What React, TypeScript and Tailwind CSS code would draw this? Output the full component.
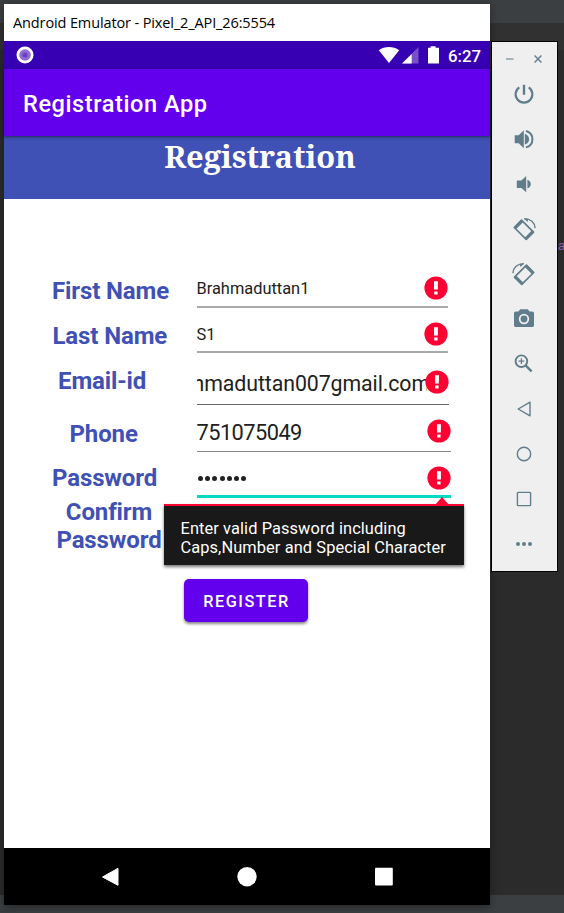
import type { ReactNode } from 'react';

function ErrorIcon({ className }: { className: string }) {
  return (
    <svg viewBox="0 0 24 24" className={`h-6 w-6 shrink-0 ${className}`}>
      <circle cx="12" cy="12" r="11.6" fill="#ff0033" />
      <path d="M10 5.2h3.9v8.2H10zM10.2 15.4h3.4v3h-3.4z" fill="#fff" />
    </svg>
  );
}

function Label({ className, children }: { className: string; children: ReactNode }) {
  return (
    <div className={`whitespace-nowrap text-[24px] leading-[28px] font-bold tracking-[-.12px] text-[#3f51b5] ${className}`}>
      {children}
    </div>
  );
}

function Tool({ children }: { children: ReactNode }) {
  return (
    <button className="flex h-[45px] w-full shrink-0 items-center justify-center pr-[2px]">
      <svg viewBox="0 0 24 24" className="h-6 w-6" fill="none" stroke="#607d8b" strokeWidth="1.5">
        {children}
      </svg>
    </button>
  );
}

function RotatePhone() {
  return (
    <>
      <path d="M9.5 2.5 L21.5 14.5 L14.2 21.7 L2.3 9.8 Z" strokeWidth="1.7" strokeLinejoin="round" />
      <path d="M1.7 9.7 L9.4 2 L11.5 4 L3.7 11.8 Z M12.4 20.3 L20 12.6 L22.2 14.7 L14.5 22.4 Z" fill="#607d8b" stroke="none" />
      <path d="M12.2 1.2 C18.6 .8 22.8 5 23.1 10.4" strokeWidth="1.4" />
      <path d="M11.8 .5 L16.5 1 L15.4 4.2 Z" fill="#607d8b" stroke="none" />
    </>
  );
}

function SidePanel() {
  return (
    <aside className="mt-[41px] ml-px flex h-[531px] w-[67px] shrink-0 flex-col border border-black bg-[#efefef]">
      <div className="flex h-[29px] shrink-0 items-center justify-between pt-[5px] pr-[15px] pl-[14px]">
        <svg viewBox="0 0 8 8" className="h-2 w-2"><path d="M0 4h7.5" stroke="#90a4ae" strokeWidth="1.6" /></svg>
        <svg viewBox="0 0 8 8" className="h-2 w-2"><path d="M.6.6l6.8 6.8M7.4.6L.6 7.4" stroke="#607d8b" strokeWidth="1.4" /></svg>
      </div>
      <div className="flex flex-col">
        <Tool>
          <path d="M7.3 5.3a8.4 8.4 0 1 0 9.4 0" strokeWidth="2.1" />
          <path d="M12 2.8v10" strokeWidth="2.4" />
        </Tool>
        <Tool>
          <path d="M2.7 8.2h4l5.1-5v18l-5.1-5h-4zM12.8 6.8c2.9 1 4.3 3 4.3 5.4s-1.4 4.4-4.3 5.4z" fill="#607d8b" stroke="none" />
          <path d="M13.9 4c4.2 1 6.5 4.4 6.5 8.2s-2.3 7.2-6.5 8.2" strokeWidth="2" />
        </Tool>
        <Tool>
          <path d="M4.8 8.5h4.6l4.8-4.4v16.2l-4.8-4.4H4.8zM15.4 7.8c2.2.9 3.4 2.5 3.4 4.4s-1.2 3.5-3.4 4.4z" fill="#607d8b" stroke="none" />
        </Tool>
        <Tool><g transform="translate(0 .7)"><RotatePhone /></g></Tool>
        <Tool><g transform="matrix(-1 0 0 1 24 .7)"><RotatePhone /></g></Tool>
        <Tool>
          <g transform="translate(0 -1)">
            <path d="M8.3 3.2h7.4l1.9 2.2h2.6c1.1 0 1.8.7 1.8 1.8v12c0 1.1-.7 1.8-1.8 1.8H3.8C2.7 21 2 20.3 2 19.2v-12c0-1.1.7-1.8 1.8-1.8h2.6z" fill="#607d8b" stroke="none" />
            <circle cx="12" cy="13" r="4.3" stroke="#efefef" strokeWidth="1.8" />
          </g>
        </Tool>
        <Tool>
          <circle cx="9.4" cy="9.2" r="5.8" strokeWidth="1.9" />
          <path d="M6.5 9.2h5.8M9.4 6.3v5.8" strokeWidth="1.3" />
          <path d="M13.6 13.4l6 6" strokeWidth="2.4" />
        </Tool>
        <Tool><path d="M18 5.2v13.6L6.2 12z" strokeWidth="1.4" strokeLinejoin="round" /></Tool>
        <Tool><circle cx="12" cy="12" r="6.7" strokeWidth="1.4" /></Tool>
        <Tool><rect x="5.4" y="5.4" width="13.2" height="13.2" rx=".8" strokeWidth="1.4" /></Tool>
        <Tool>
          <g fill="#607d8b" stroke="none"><circle cx="6" cy="12" r="2" /><circle cx="12" cy="12" r="2" /><circle cx="18" cy="12" r="2" /></g>
        </Tool>
      </div>
    </aside>
  );
}

function StatusBar() {
  return (
    <div className="flex h-7 shrink-0 items-center bg-[#3700b3] pr-[9px] pl-[12px] text-white">
      <svg viewBox="0 0 18 18" className="h-[18px] w-[18px]">
        <circle cx="9" cy="9" r="8.5" fill="#fff" /><circle cx="9" cy="9" r="5.8" fill="#936bd5" /><circle cx="9" cy="9" r="2.6" fill="#6840c5" />
      </svg>
      <svg viewBox="0 0 62 18" className="ml-auto h-[18px] w-[62px]">
        <path d="M.8 4.3C6.8-.1 15.1-.1 21.2 4.3L11 17z" fill="#fff" />
        <path d="M40.5 1v16.5H24z" fill="#7a4fcb" /><path d="M33.7 8v9.5H24z" fill="#fff" />
        <path d="M52.6.3h5v1.5H61V17.5H50V1.8h2.6z" fill="#fff" />
      </svg>
      <span className="ml-[8px] pt-px text-[16.8px] leading-7 font-medium">6:27</span>
    </div>
  );
}

function Form() {
  return (
    <div className="flex h-[374px] shrink-0 pt-[71px]">
      <div className="flex w-[192px] flex-col">
        <Label className="mt-[7px] pl-12">First Name</Label>
        <Label className="mt-[17px] pl-[48.5px]">Last Name</Label>
        <Label className="mt-[17px] pl-[54px]">Email-id</Label>
        <Label className="mt-[25px] pl-[65.5px]">Phone</Label>
        <Label className="mt-[16px] pl-12">Password</Label>
        <Label className="mt-[6px] w-[210px] text-center">Confirm<br />Password</Label>
      </div>
      <div className="flex flex-1 flex-col pl-px text-[#212121]">
        <div className="flex h-[38px] w-[251px] items-center justify-between border-b-2 border-[#aaa]">
          <span className="-ml-[.5px] pt-[3px] text-[16.4px]">Brahmaduttan1</span><ErrorIcon className="" />
        </div>
        <div className="flex h-[45px] w-[251px] items-center justify-between border-b-2 border-[#aaa] pt-[8px]">
          <span className="-ml-[.5px] pt-[3px] text-[16.4px]">S1</span><ErrorIcon className="" />
        </div>
        <div className="flex h-[52px] w-[252px] items-center border-b border-[#666] pt-[7px]">
          <div className="flex w-[230px] justify-end overflow-hidden pt-[3px]">
            <span className="-mr-[3px] whitespace-nowrap text-[21.3px] leading-7 tracking-[-.08px]">Brahmaduttan007gmail.com</span>
          </div>
          <ErrorIcon className="-ml-[2px]" />
        </div>
        <div className="flex h-[47px] w-[254px] items-center justify-between border-b border-[#888] pt-[6px]">
          <span className="-ml-[.5px] pt-[4px] text-[21.8px] tracking-[-.55px]">751075049</span><ErrorIcon className="" />
        </div>
        <div className="relative flex h-[46px] w-[254px] items-center justify-between border-b-[3px] border-[#03dac5] pt-[9px]">
          <div className="flex gap-[2.2px] pl-px">
            {Array.from({ length: 7 }, (_, i) => <i key={i} className="h-[5px] w-[5px] rounded-full bg-[#212121]" />)}
          </div>
          <ErrorIcon className="" />
          <div className="absolute top-[52px] -left-[33px] z-10 h-[61px] w-[300px] border-t-2 border-[#ff0033] bg-[#191919] pt-[13px] pl-[16.5px] text-[16.4px] leading-[19px] tracking-[.09px] whitespace-nowrap text-white shadow-[0_2px_3px_#777]">
            <svg viewBox="0 0 14 8" className="absolute -top-[9px] left-[271px] h-2 w-[14px]"><path d="M7 0L14 8H0z" fill="#ff0033" /></svg>
            Enter valid Password including<br />Caps,Number and Special Character
          </div>
        </div>
      </div>
    </div>
  );
}

export default function App() {
  return (
    <main className="relative flex h-[913px] w-[564px] overflow-hidden bg-[linear-gradient(#3c3f41_0_23px,#313131_23px_50px,#2b2b2b_50px_895px,#3c3f41_895px)] pl-1 font-['Roboto',sans-serif]">
      <section className="mt-1 flex h-[901px] w-[486px] shrink-0 flex-col bg-white shadow-[0_2px_8px_#1118]">
        <div className="flex h-[37px] shrink-0 items-center pl-[9px] font-['Open_Sans',sans-serif] text-[14.5px] tracking-[-.12px] text-black">Android Emulator - Pixel_2_API_26:5554</div>
        <StatusBar />
        <header className="relative z-10 flex h-[67px] shrink-0 items-center bg-[#6200ee] pt-[4px] pl-[19px] text-[23.6px] font-medium tracking-[.56px] text-white shadow-[0_1px_3px_#0008]">Registration App</header>
        <div className="h-[63px] shrink-0 bg-[#3f51b5] pl-[26px] text-center font-['Noto_Serif','DejaVu_Serif',serif] text-[30.8px] leading-[41px] font-bold text-white">Registration</div>
        <Form />
        <div className="flex flex-1 items-start pt-[6px] pl-[180px]">
          <button className="h-[43px] w-[124px] rounded-[5px] bg-[#6200ee] pt-[3px] pl-px text-[16.3px] font-medium tracking-[1.5px] text-white shadow-[0_2px_3px_#888]">REGISTER</button>
        </div>
        <nav className="flex h-[57px] shrink-0 items-center justify-between bg-black pr-[96px] pl-[96px]">
          <svg viewBox="0 0 20 20" className="h-5 w-5"><path d="M2.5 10L18 1.3v17z" fill="#fff" stroke="#fff" strokeLinejoin="round" /></svg>
          <svg viewBox="0 0 20 20" className="h-5 w-5"><circle cx="10" cy="9.7" r="9.7" fill="#fff" /></svg>
          <svg viewBox="0 0 20 20" className="h-5 w-5"><rect x="1" y=".8" width="17.8" height="17.8" rx="1" fill="#fff" /></svg>
        </nav>
      </section>
      <SidePanel />
      <div className="mt-[238px] w-1.5 shrink-0 whitespace-nowrap font-['Liberation_Mono',monospace] text-[12px] tracking-[-4px] text-[#8c67ac]">a'</div>
    </main>
  );
}
